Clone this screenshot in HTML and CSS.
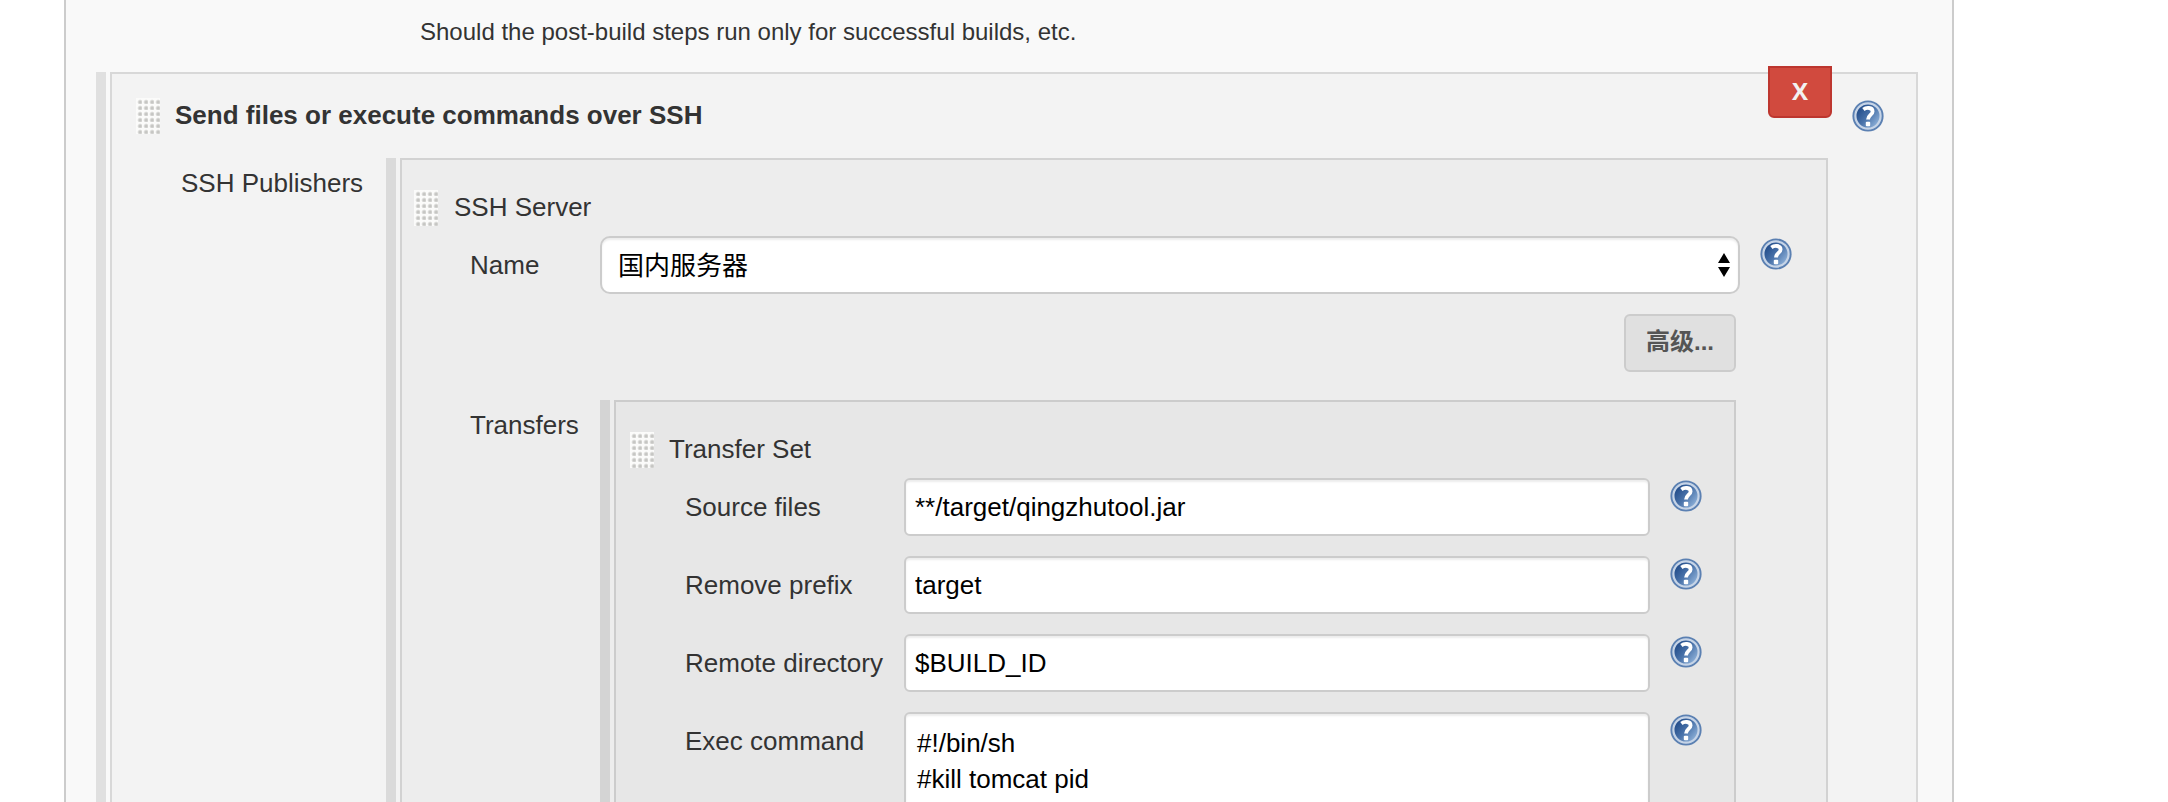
FILE: index.html
```html
<!DOCTYPE html>
<html lang="en">
<head>
    <meta charset="UTF-8">
    <meta name="viewport" content="width=device-width, initial-scale=1.0">
    <title>Job Configuration</title>
    <link rel="stylesheet" href="styles.css">
</head>
<body>

    <!-- Shared icons -->
    <svg class="icon-defs" width="0" height="0">
        <defs>
            <linearGradient id="help-fill" x1="0" y1="0.1" x2="1" y2="0.9">
                <stop offset="0.1" stop-color="#204a88"/>
                <stop offset="0.5" stop-color="#4a73aa"/>
                <stop offset="0.9" stop-color="#8db0d8"/>
            </linearGradient>
            <symbol id="help" viewBox="0 0 32 32">
                <circle cx="16" cy="16" r="15.6" fill="#5b80b2"/>
                <circle cx="16" cy="16" r="12.6" fill="url(#help-fill)" stroke="#c6d4e7" stroke-width="2.2"/>
                <path d="M11.4 9.4 C14 7.4 20.6 7 20.6 11.4 C20.6 15 16 15 16 19.6" fill="none" stroke="#fff" stroke-width="3.8"/>
                <rect x="13.8" y="21.8" width="4.4" height="4.4" rx="1" fill="#fff"/>
            </symbol>
        </defs>
    </svg>

    <main class="config">
        <p class="description">Should the post-build steps run only for successful builds, etc.</p>

        <!-- SSH publisher -->
        <section class="chunk publisher">
            <button class="delete-btn">X</button>
            <div class="publisher-header">
                <span class="handle"></span>
                <h2>Send files or execute commands over SSH</h2>
                <svg class="help"><use href="#help"/></svg>
            </div>

            <div class="publisher-body">
                <div class="label">SSH Publishers</div>

                <!-- Server -->
                <section class="chunk server">
                    <div class="chunk-header">
                        <span class="handle"></span>
                        <span class="chunk-title">SSH Server</span>
                    </div>
                    <div class="server-row">
                        <label class="label" for="server">Name</label>
                        <div class="select-wrap">
                            <select id="server">
                                <option>国内服务器</option>
                            </select>
                            <svg class="select-arrows" width="12" height="24" viewBox="0 0 12 24">
                                <path d="M6 0 L12 10 H0 Z M0 14 H12 L6 24 Z"/>
                            </svg>
                        </div>
                        <svg class="help"><use href="#help"/></svg>
                    </div>
                    <div class="advanced">
                        <button class="advanced-btn">高级...</button>
                    </div>

                    <div class="transfers">
                        <div class="label">Transfers</div>

                        <!-- Transfer set -->
                        <section class="chunk transfer-set">
                            <div class="chunk-header">
                                <span class="handle"></span>
                                <span class="chunk-title">Transfer Set</span>
                            </div>
                            <div class="field">
                                <label class="label" for="source">Source files</label>
                                <input id="source" type="text" value="**/target/qingzhutool.jar">
                                <svg class="help"><use href="#help"/></svg>
                            </div>
                            <div class="field">
                                <label class="label" for="prefix">Remove prefix</label>
                                <input id="prefix" type="text" value="target">
                                <svg class="help"><use href="#help"/></svg>
                            </div>
                            <div class="field">
                                <label class="label" for="remote">Remote directory</label>
                                <input id="remote" type="text" value="$BUILD_ID">
                                <svg class="help"><use href="#help"/></svg>
                            </div>
                            <div class="field">
                                <label class="label" for="exec">Exec command</label>
                                <textarea id="exec" spellcheck="false">#!/bin/sh
#kill tomcat pid</textarea>
                                <svg class="help"><use href="#help"/></svg>
                            </div>
                        </section>
                    </div>
                </section>
            </div>
        </section>
    </main>

</body>
</html>
```

FILE: styles.css
```css
* {
    box-sizing: border-box;
}

/* General page styles */
body {
    margin: 0;
    height: 802px;
    overflow: hidden;
    background-color: #fff;
    color: #333;
    font-family: "Liberation Sans", "Noto Sans CJK SC", sans-serif;
    font-size: 26px;
    line-height: 36px;
}

.icon-defs {
    display: block;
}

.config {
    width: 1890px;
    height: 802px;
    margin-left: 64px;
    padding: 14px 34px 0 44px;
    overflow: hidden;
    background-color: #f9f9f9;
    border-left: 2px solid #ccc;
    border-right: 2px solid #ccc;
}

.description {
    margin: 0 0 22px 310px;
    font-size: 24px;
}

/* Nested boxes, each with a drag strip on the left */
.chunk {
    position: relative;
    height: 900px;
    border: 2px solid #d8d8d8;
    background-color: #f3f3f3;
}

.chunk::before {
    content: "";
    position: absolute;
    top: -2px;
    bottom: 0;
    left: -16px;
    width: 10px;
    background-color: #e0e0e0;
}

.label {
    flex-shrink: 0;
    white-space: nowrap;
}

.handle {
    flex-shrink: 0;
    width: 24px;
    height: 36px;
    background-color: #fbfbfa;
    background-image: radial-gradient(circle at 4.2px 4.2px, #c6c6c3 0.8px, #d9d9d7 1.8px, #fbfbfa 3px);
    background-size: 6px 6px;
}

.help {
    flex-shrink: 0;
    width: 32px;
    height: 32px;
}

/* Publisher */
.delete-btn {
    position: absolute;
    top: -8px;
    right: 84px;
    width: 64px;
    height: 52px;
    padding: 0 0 4px;
    border: 2px solid #bd362f;
    border-radius: 0 0 6px 6px;
    background-color: #d14a3e;
    color: #f2f2f2;
    font-family: "Open Sans", sans-serif;
    font-size: 24px;
    font-weight: 700;
}

.publisher-header {
    display: flex;
    height: 84px;
    padding: 24px 32px 0 24px;
}

.publisher-header h2 {
    flex: 1;
    margin: -1px 0 0 15px;
    font-size: 26px;
    font-weight: 700;
}

.publisher-header .help {
    margin-top: 2px;
}

.publisher-body {
    display: flex;
    padding: 0 88px 0 69px;
}

.publisher-body > .label {
    width: 219px;
    padding-top: 7px;
}

/* Server */
.server {
    flex: 1;
    padding: 30px 0 0 12px;
    border-color: #d2d2d2;
    background-color: #ededed;
}

.server::before {
    background-color: #dadada;
}

.chunk-header {
    display: flex;
    gap: 16px;
    height: 46px;
}

.chunk-title {
    margin-top: -1px;
}

.server-row {
    display: flex;
    padding-left: 56px;
}

.server-row .label {
    width: 130px;
    padding-top: 11px;
}

.select-wrap {
    position: relative;
    width: 1140px;
    margin-right: 20px;
}

select {
    width: 100%;
    height: 58px;
    padding: 1px 40px 0 16px;
    appearance: none;
    border: 2px solid #ccc;
    border-radius: 10px;
    background-color: #fff;
    box-shadow: inset 0 2px 2px rgba(0, 0, 0, 0.075);
    color: #000;
    font: inherit;
}

.select-arrows {
    position: absolute;
    top: 17px;
    right: 10px;
}

.server-row .help {
    margin-top: 2px;
}

.advanced {
    display: flex;
    justify-content: flex-end;
    padding: 20px 90px 28px 0;
}

.advanced-btn {
    width: 112px;
    height: 58px;
    padding: 0 0 7px;
    border: 2px solid #ccc;
    border-radius: 6px;
    background-color: #e0e0e0;
    color: #555;
    font-family: "Liberation Sans", "Noto Sans CJK SC", sans-serif;
    font-size: 24px;
    font-weight: 700;
}

.transfers {
    display: flex;
    padding: 0 90px 0 56px;
}

.transfers > .label {
    width: 144px;
    padding-top: 7px;
}

/* Transfer set */
.transfer-set {
    flex: 1;
    padding: 30px 0 0 14px;
    border-color: #ccc;
    background-color: #e7e7e7;
}

.transfer-set .chunk-header {
    gap: 15px;
}

.transfer-set::before {
    background-color: #d4d4d4;
}

.field {
    display: flex;
    margin-bottom: 20px;
    padding-left: 55px;
}

.field .label {
    width: 219px;
    padding-top: 11px;
}

.field input,
.field textarea {
    width: 746px;
    height: 58px;
    margin: 0 20px 0 0;
    padding: 0 9px;
    border: 2px solid #ccc;
    border-radius: 6px;
    background-color: #fff;
    box-shadow: inset 0 2px 2px rgba(0, 0, 0, 0.075);
    color: #000;
    font: inherit;
}

.field textarea {
    height: 200px;
    padding: 11px;
    resize: none;
}

.field .help {
    margin-top: 2px;
}
```
